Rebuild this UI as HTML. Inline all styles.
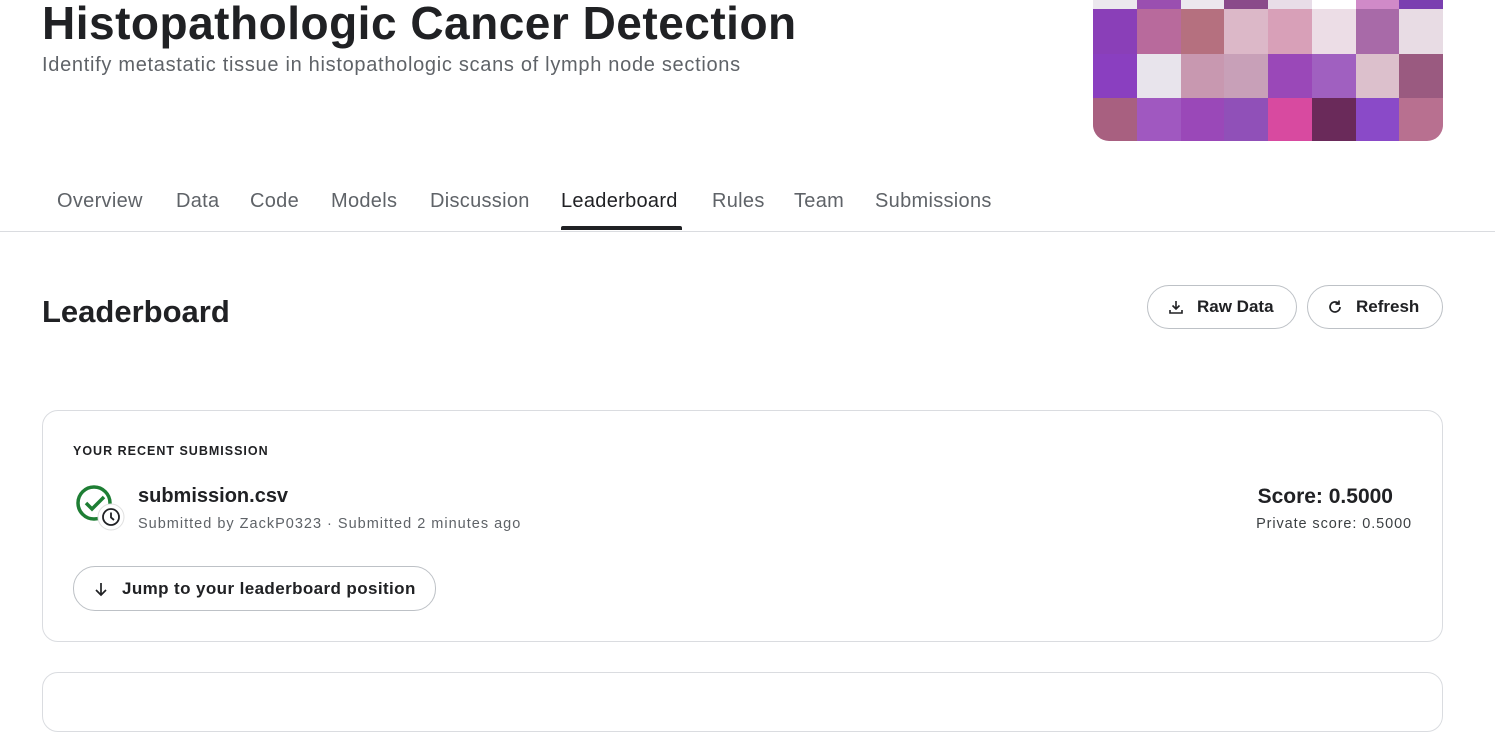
<!DOCTYPE html><html><head><style>
body{margin:0;width:1495px;height:680px;overflow:hidden;background:#fff;font-family:"Liberation Sans",sans-serif;color:#202124;position:relative}
.a{position:absolute}
h1{position:absolute;left:42px;top:-4px;margin:0;font-size:46px;font-weight:700;letter-spacing:0.5px}
.sub{left:42px;top:54px;font-size:20px;color:#5f6368;letter-spacing:0.7px}
.img{left:1093px;top:0;width:350px;height:141px;border-radius:0 0 16px 16px;overflow:hidden;display:grid;grid-template-columns:repeat(8,1fr);grid-template-rows:9px 45px 44px 43px}
.tab{position:absolute;top:190px;font-size:20px;color:#5f6368;letter-spacing:0.3px}
.ul{left:561px;top:226px;width:121px;height:4px;background:#202124;border-radius:2px 2px 0 0}
.hr{left:0;top:231px;width:1495px;height:1px;background:#dadce0}
.btn{border:1px solid #bdc1c6;border-radius:22px;font-weight:700;font-size:17px;display:flex;align-items:center;box-sizing:border-box}
.card{border:1px solid #dadce0;border-radius:16px;box-sizing:border-box}
</style></head><body>
<h1>Histopathologic Cancer Detection</h1>
<div class="a sub">Identify metastatic tissue in histopathologic scans of lymph node sections</div>
<div class="a img">
<div style="background:#ece8ee"></div><div style="background:#9a4fb0"></div><div style="background:#ece8ee"></div><div style="background:#8a4a8a"></div><div style="background:#e8dde8"></div><div style="background:#fff"></div><div style="background:#d08ac8"></div><div style="background:#7a3fb0"></div>
<div style="background:#8a3fb8"></div><div style="background:#b86a9c"></div><div style="background:#b5707f"></div><div style="background:#dcb8c8"></div><div style="background:#d8a0b8"></div><div style="background:#ecdde6"></div><div style="background:#a86aa8"></div><div style="background:#e8dce4"></div>
<div style="background:#8a3fc0"></div><div style="background:#e8e4ec"></div><div style="background:#c898b0"></div><div style="background:#c8a0b8"></div><div style="background:#9a48b8"></div><div style="background:#a060c0"></div><div style="background:#dcc0cc"></div><div style="background:#9a5a80"></div>
<div style="background:#a86080"></div><div style="background:#a058c0"></div><div style="background:#9a48b8"></div><div style="background:#9050b8"></div><div style="background:#d84aa0"></div><div style="background:#6a2a5a"></div><div style="background:#8a4ac8"></div><div style="background:#b87090"></div>
</div>
<div class="tab" style="left:57px">Overview</div>
<div class="tab" style="left:176px">Data</div>
<div class="tab" style="left:250px">Code</div>
<div class="tab" style="left:331px">Models</div>
<div class="tab" style="left:430px">Discussion</div>
<div class="tab" style="left:561px;color:#202124">Leaderboard</div>
<div class="tab" style="left:712px">Rules</div>
<div class="tab" style="left:794px">Team</div>
<div class="tab" style="left:875px">Submissions</div>
<div class="a ul"></div><div class="a hr"></div>
<div class="a" style="left:42px;top:294px;font-size:31px;font-weight:700">Leaderboard</div>
<div class="a btn" style="left:1147px;top:285px;width:150px;height:44px;padding-left:20px"><svg width="16" height="16" viewBox="0 0 16 16" fill="none" stroke="#202124" stroke-width="1.6"><path d="M8 2v8M4.5 6.5 8 10l3.5-3.5M2 11v3h12v-3"/></svg><span style="margin-left:13px">Raw Data</span></div>
<div class="a btn" style="left:1307px;top:285px;width:136px;height:44px;padding-left:19px"><svg width="16" height="16" viewBox="0 0 16 16" fill="none" stroke="#202124" stroke-width="1.7"><path d="M13 8a5 5 0 1 1-1.5-3.6"/><path d="M12 1.5v3.5H8.5"/></svg><span style="margin-left:13px">Refresh</span></div>
<div class="a card" style="left:42px;top:410px;width:1401px;height:232px"></div>
<div class="a" style="left:73px;top:444px;font-size:12.5px;font-weight:700;letter-spacing:1px">YOUR RECENT SUBMISSION</div>
<svg class="a" style="left:75px;top:484px" width="52" height="50" viewBox="0 0 52 50"><circle cx="19" cy="19" r="16" fill="none" stroke="#1e7e34" stroke-width="3.5"/><path d="M11 19l6 6 12-12" fill="none" stroke="#1e7e34" stroke-width="3.5"/><circle cx="36" cy="33" r="13" fill="#fff" stroke="#e0e0e0"/><circle cx="36" cy="33" r="8" fill="none" stroke="#202124" stroke-width="1.8"/><path d="M36 28.5v5l3 2.5" fill="none" stroke="#202124" stroke-width="1.8"/></svg>
<div class="a" style="left:138px;top:485px;font-size:20px;font-weight:700">submission.csv</div>
<div class="a" style="left:138px;top:516px;font-size:14.5px;color:#5f6368;letter-spacing:1px">Submitted by ZackP0323 · Submitted 2 minutes ago</div>
<div class="a" style="right:102px;top:485px;font-size:21px;font-weight:700">Score: 0.5000</div>
<div class="a" style="right:83px;top:516px;font-size:14.5px;color:#3c4043;letter-spacing:0.9px">Private score: 0.5000</div>
<div class="a btn" style="left:73px;top:566px;width:363px;height:45px;padding-left:19px"><svg width="16" height="16" viewBox="0 0 16 16" fill="none" stroke="#202124" stroke-width="1.7"><path d="M8 2v12M3 9l5 5 5-5"/></svg><span style="margin-left:13px;letter-spacing:0.4px">Jump to your leaderboard position</span></div>
<div class="a card" style="left:42px;top:672px;width:1401px;height:60px"></div>
</body></html>
